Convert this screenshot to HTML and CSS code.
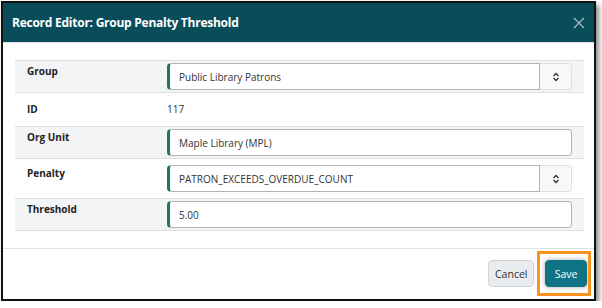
FILE: index.html
```html
<!DOCTYPE html>
<html>
<head>
<meta charset="utf-8">
<link rel="stylesheet" href="styles.css">
</head>
<body>
<div class="dialog">
  <div class="header">
    <div class="title">Record Editor: Group Penalty Threshold</div>
    <svg class="close" width="12" height="12" viewBox="0 0 12 12"><path d="M1 1L11 11M11 1L1 11" stroke="#9fb9be" stroke-width="1.4" fill="none"/></svg>
  </div>
  <div class="body">
    <div class="table">
      <div class="row striped">
        <div class="label">Group</div>
        <div class="value">
          <div class="select">
            <div class="select-main">Public Library Patrons</div>
            <div class="select-arrow"><svg width="8" height="10" viewBox="0 0 8 10"><path d="M1.5 4L4 1.5L6.5 4M1.5 6L4 8.5L6.5 6" stroke="#333" stroke-width="1.4" fill="none"/></svg></div>
          </div>
        </div>
      </div>
      <div class="row id-row">
        <div class="label">ID</div>
        <div class="value plain">117</div>
      </div>
      <div class="row striped">
        <div class="label">Org Unit</div>
        <div class="value"><div class="input">Maple Library (MPL)</div></div>
      </div>
      <div class="row penalty-row">
        <div class="label">Penalty</div>
        <div class="value">
          <div class="select">
            <div class="select-main">PATRON_EXCEEDS_OVERDUE_COUNT</div>
            <div class="select-arrow"><svg width="8" height="10" viewBox="0 0 8 10"><path d="M1.5 4L4 1.5L6.5 4M1.5 6L4 8.5L6.5 6" stroke="#333" stroke-width="1.4" fill="none"/></svg></div>
          </div>
        </div>
      </div>
      <div class="row striped last">
        <div class="label">Threshold</div>
        <div class="value"><div class="input">5.00</div></div>
      </div>
    </div>
  </div>
  <div class="footer">
    <button class="btn cancel">Cancel</button>
    <button class="btn save">Save</button>
    <div class="highlight"></div>
  </div>
</div>
</body>
</html>
```

FILE: styles.css
```css
* { box-sizing: border-box; }
html, body { margin: 0; padding: 0; background: #fff; }
body { font-family: "Open Sans", "Noto Sans", sans-serif; color: #222; }

.dialog {
  margin: 1px 0 0 1px;
  width: 595px;
  height: 300px;
  border: 2px solid #111;
  background: #fff;
  box-shadow: 3px 4px 5px rgba(0,0,0,0.45);
  display: flex;
  flex-direction: column;
}

.header {
  height: 40px;
  background: #0a4d5a;
  border-bottom: 1px solid #dde1e5;
  display: flex;
  align-items: center;
  justify-content: space-between;
  padding: 0 9px 0 9px;
  flex: none;
}
.title { color: #fff; font-weight: 700; font-size: 12px; letter-spacing: -0.25px; }
.close { margin-top: 1px; }

.body { padding: 17px 10px 17px 12px; border-bottom: 1px solid #dde1e5; flex: none; }

.table { border-bottom: 1px solid #dde1e5; }
.row {
  display: flex;
  border-top: 1px solid #dde1e5;
  height: 32px;
  padding-top: 2px;
  line-height: 14px;
}
.row.striped { background: #f3f4f6; }
.row.id-row { height: 34px; }
.row.penalty-row { height: 40px; padding-top: 6px; }

.label {
  width: 152px;
  padding: 1px 0 0 12px;
  font-weight: 700;
  font-size: 10px;
  color: #222;
}
.id-row .label { padding-top: 7px; }
.value { flex: 1; padding-right: 12px; }
.value.plain { font-size: 10px; padding-top: 7px; color: #333; }

.input, .select-main {
  height: 27px;
  border: 1px solid #aeb5bc;
  border-left: 3px solid #1f7a4c;
  border-radius: 4px;
  background: #fff;
  font-size: 10px;
  color: #333;
  display: flex;
  align-items: center;
  padding-left: 9px;
}
.select { display: flex; }
.select-main { flex: 1; border-radius: 4px 0 0 4px; }
.select-arrow {
  width: 32px;
  height: 27px;
  border: 1px solid #dde1e5;
  border-left: none;
  border-radius: 0 4px 4px 0;
  background: #f7f8f9;
  display: flex;
  align-items: center;
  justify-content: center;
}

.footer {
  flex: 1;
  display: flex;
  justify-content: flex-end;
  align-items: center;
  gap: 11px;
  padding: 0 7px 1px 0;
  position: relative;
}
.btn {
  height: 27px;
  border-radius: 4px;
  font-family: "Open Sans", "Noto Sans", sans-serif;
  font-size: 10.5px;
  padding: 0 6px;
  cursor: pointer;
}
.cancel { width: 46px; background: #e9ecef; border: 1px solid #cfd4d9; color: #333; }
.save { width: 42px; background: #0e7384; border: 1px solid #0e7384; color: #fff; box-shadow: 0 0 5px rgba(0,0,0,0.35); }
.highlight {
  position: absolute;
  left: 534px;
  top: 2px;
  width: 54px;
  height: 45px;
  border: 3px solid #f7931e;
}
```
